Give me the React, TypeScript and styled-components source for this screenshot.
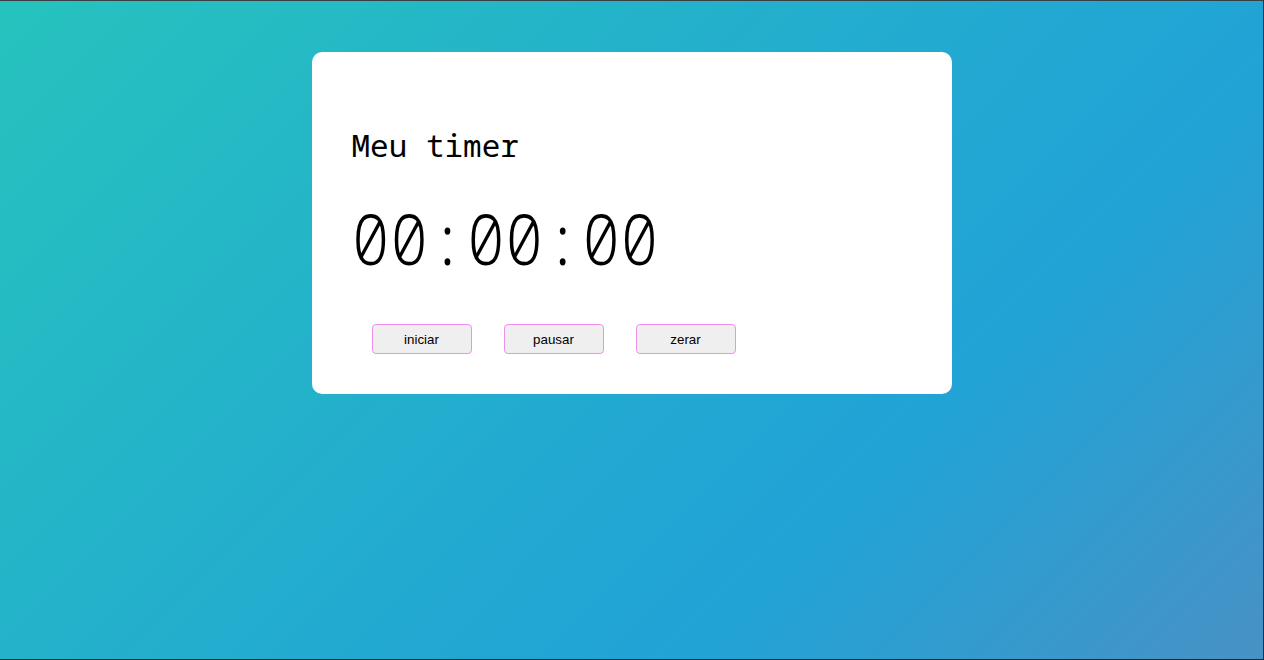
import React from "react";
import styled, { createGlobalStyle } from "styled-components";

const Global = createGlobalStyle`
  html, body { margin: 0; padding: 0; height: 100%; }
  #root { height: 100%; }
`;

const Page = styled.main`
  box-sizing: border-box;
  min-height: 100vh;
  border-top: 1px solid #3a3f44;
  border-right: 1px solid #1f2f3a;
  border-bottom: 1px solid #10303c;
  background: linear-gradient(135deg, #26c3bd 0%, #22a8d2 55%, #21a3d6 70%, #4891c5 100%);
  display: flex;
  justify-content: center;
  align-items: flex-start;
  padding-top: 51px;
`;

const Card = styled.section`
  box-sizing: border-box;
  width: 640px;
  height: 342px;
  background: #ffffff;
  border-radius: 10px;
  padding: 40px;
  display: flex;
  flex-direction: column;
`;

const Title = styled.h1`
  margin: 35px 0 0 0;
  font-family: "Noto Sans Mono", monospace;
  font-weight: 400;
  font-size: 31px;
  line-height: 37px;
  color: #000;
`;

const Clock = styled.div`
  margin-top: 39px;
  font-family: "Noto Sans Mono", monospace;
  font-weight: 300;
  font-size: 64px;
  line-height: 75px;
  color: #000;
  transform: scaleY(1.08);
  transform-origin: 0 62px;
`;

const Controls = styled.div`
  display: flex;
  gap: 32px;
  padding-left: 20px;
  margin-top: 46px;
`;

const Button = styled.button`
  width: 100px;
  height: 30px;
  background: #efefef;
  border: 1px solid #f08ef0;
  border-radius: 4px;
  font-family: "Liberation Sans", Arial, sans-serif;
  font-size: 13.33px;
  color: #000;
  padding: 0;
  cursor: pointer;
`;

export default function App() {
  return (
    <>
      <Global />
      <Page>
        <Card>
          <Title>Meu timer</Title>
          <Clock>00:00:00</Clock>
          <Controls>
            <Button>iniciar</Button>
            <Button>pausar</Button>
            <Button>zerar</Button>
          </Controls>
        </Card>
      </Page>
    </>
  );
}
